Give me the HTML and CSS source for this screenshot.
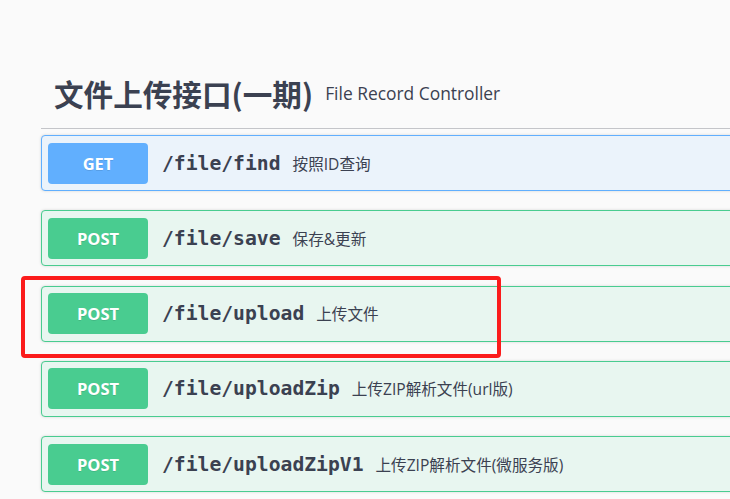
FILE: index.html
```html
<!DOCTYPE html>
<html lang="zh-CN">
<head>
<meta charset="utf-8">
<title>File Record Controller</title>
<link rel="stylesheet" href="styles.css">
</head>
<body>
<div class="page">
  <div class="tag-header">
    <h3 class="tag-title">文件上传接口(一期)</h3>
    <span class="tag-desc">File Record Controller</span>
  </div>
  <div class="ops">
    <div class="opblock get">
      <span class="method">GET</span>
      <span class="path">/file/find</span>
      <span class="summary">按照ID查询</span>
    </div>
    <div class="opblock post">
      <span class="method">POST</span>
      <span class="path">/file/save</span>
      <span class="summary">保存&amp;更新</span>
    </div>
    <div class="opblock post">
      <span class="method">POST</span>
      <span class="path">/file/upload</span>
      <span class="summary">上传文件</span>
    </div>
    <div class="opblock post">
      <span class="method">POST</span>
      <span class="path">/file/uploadZip</span>
      <span class="summary">上传ZIP解析文件(url版)</span>
    </div>
    <div class="opblock post">
      <span class="method">POST</span>
      <span class="path">/file/uploadZipV1</span>
      <span class="summary">上传ZIP解析文件(微服务版)</span>
    </div>
  </div>
</div>
<div class="highlight"></div>
</body>
</html>
```
FILE: styles.css
```css
html, body {
  margin: 0;
  padding: 0;
  background: #fafafa;
  overflow: hidden;
  height: 499px;
}
body {
  position: relative;
  font-family: "Open Sans", "Noto Sans CJK SC", sans-serif;
  color: #3b4151;
}
.page {
  width: 780px;
  padding-left: 41px;
}
.tag-header {
  display: flex;
  align-items: center;
  height: 129px;
  box-sizing: border-box;
  padding: 58px 0 0 13px;
  border-bottom: 1px solid #c4c5c9;
}
.tag-title {
  margin: 0;
  font-family: "Noto Sans CJK SC", sans-serif;
  font-weight: 700;
  font-size: 29.6px;
  line-height: 35px;
  color: #3b4151;
}
.tag-desc {
  margin-left: 12px;
  font-size: 17.4px;
  line-height: 24px;
  color: #3b4151;
}
.ops {
  padding-top: 6px;
}
.opblock {
  display: flex;
  align-items: center;
  height: 56px;
  box-sizing: border-box;
  padding: 0 6px;
  margin-bottom: 19.25px;
  border: 1px solid;
  border-radius: 4px;
  box-shadow: 0 0 3px rgba(0, 0, 0, 0.15);
}
.opblock.get {
  background: #ebf3fb;
  border-color: #61affe;
}
.opblock.post {
  background: #e8f6f0;
  border-color: #49cc90;
}
.method {
  flex: none;
  width: 100px;
  height: 41px;
  display: flex;
  align-items: center;
  justify-content: center;
  border-radius: 4px;
  color: #fff;
  font-family: "Open Sans", sans-serif;
  font-weight: 700;
  font-size: 16.5px;
  text-shadow: 0 1px 0 rgba(0, 0, 0, 0.1);
}
.get .method { background: #61affe; }
.post .method { background: #49cc90; }
.path {
  margin-left: 14px;
  font-family: "DejaVu Sans Mono", monospace;
  font-weight: 700;
  font-size: 19.7px;
  color: #3b4151;
}
.summary {
  margin-left: 12px;
  font-family: "Open Sans", "Noto Sans CJK SC", sans-serif;
  font-size: 15.6px;
  color: #3b4151;
}
.highlight {
  position: absolute;
  left: 21px;
  top: 276px;
  width: 480px;
  height: 82px;
  box-sizing: border-box;
  border: 4px solid #fb1b1b;
  border-radius: 4px;
}
```
